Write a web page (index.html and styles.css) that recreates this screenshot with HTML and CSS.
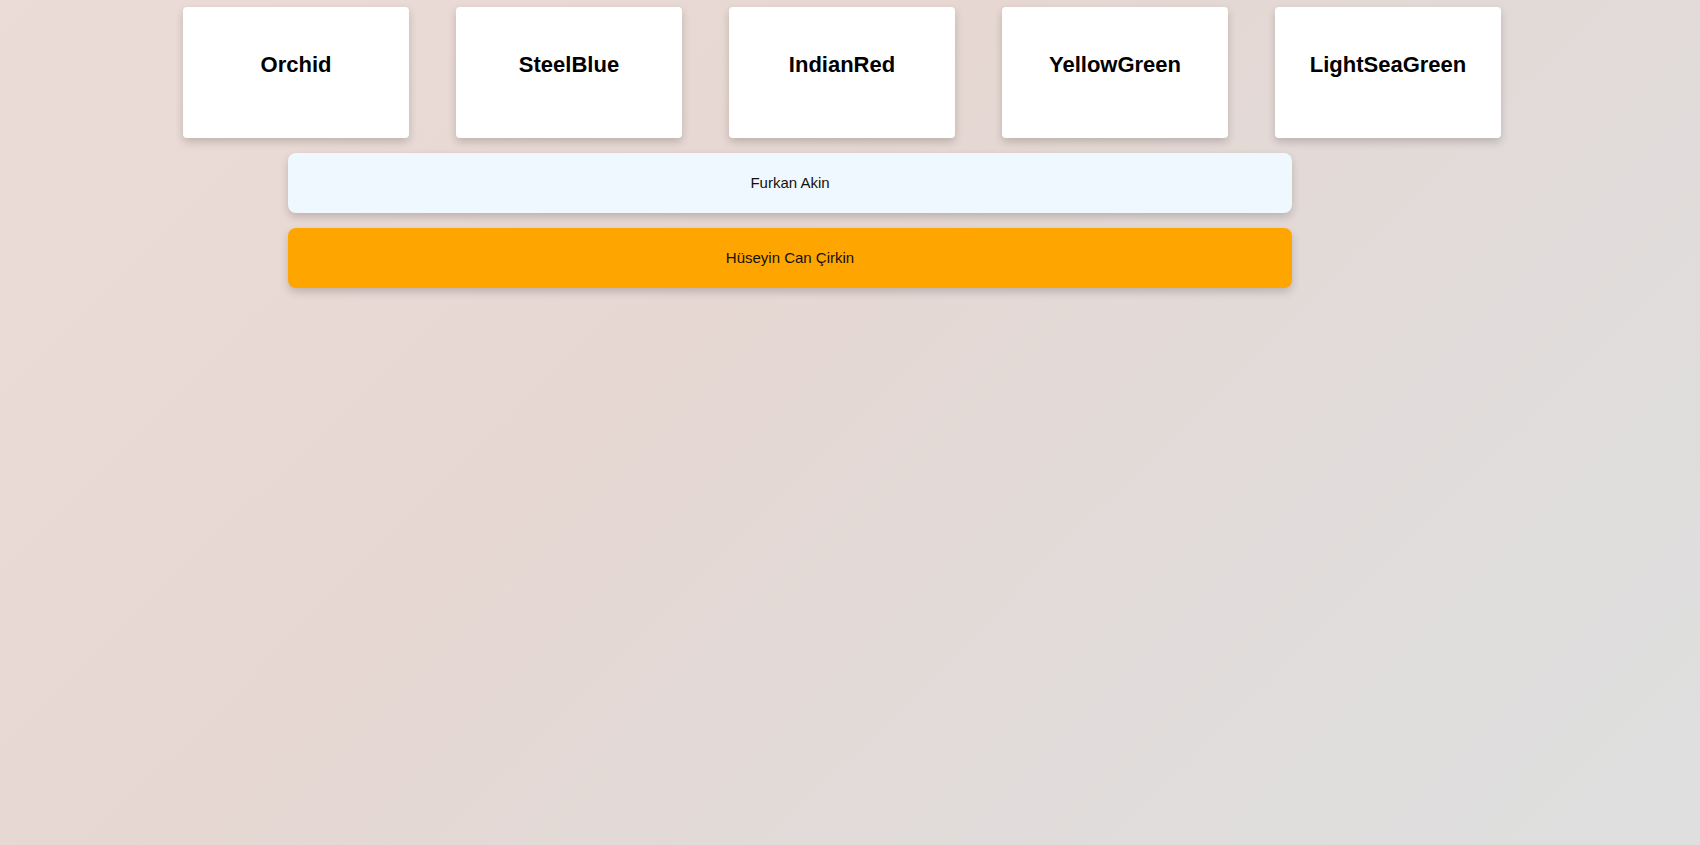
FILE: index.html
```html
<!DOCTYPE html>
<html lang="tr">
<head>
<meta charset="utf-8">
<title>Colors</title>
<link rel="stylesheet" href="styles.css">
</head>
<body>
  <div class="cards">
    <div class="card"><h2 class="card-title">Orchid</h2></div>
    <div class="card"><h2 class="card-title">SteelBlue</h2></div>
    <div class="card"><h2 class="card-title">IndianRed</h2></div>
    <div class="card"><h2 class="card-title">YellowGreen</h2></div>
    <div class="card"><h2 class="card-title">LightSeaGreen</h2></div>
  </div>
  <div class="list">
    <div class="item item-light">Furkan Akin</div>
    <div class="item item-orange">Hüseyin Can Çirkin</div>
  </div>
</body>
</html>
```
FILE: styles.css
```css
html, body {
  margin: 0;
  padding: 0;
  height: 100%;
}
body {
  font-family: "Liberation Sans", Arial, sans-serif;
  color: #000;
  background: linear-gradient(135deg, #ecdcd7 0%, #e6d7d2 40%, #e0dcdb 75%, #dedfdf 100%);
  min-height: 845px;
  overflow: hidden;
}
.cards {
  display: flex;
  gap: 47px;
  padding: 7px 0 0 183px;
}
.card {
  width: 226px;
  height: 131px;
  box-sizing: border-box;
  background: #fff;
  border-radius: 4px;
  box-shadow: 0 4px 8px rgba(0, 0, 0, 0.18);
  padding-top: 45px;
  text-align: center;
}
.card-title {
  margin: 0;
  font-size: 22px;
  font-weight: bold;
  line-height: 25px;
}
.list {
  display: flex;
  flex-direction: column;
  gap: 15px;
  width: 1004px;
  margin: 15px 0 0 288px;
}
.item {
  height: 60px;
  border-radius: 8px;
  display: flex;
  align-items: center;
  justify-content: center;
  font-size: 15px;
  line-height: 17px;
  padding-bottom: 2px;
  box-sizing: border-box;
  color: #111;
  box-shadow: 0 4px 8px rgba(0, 0, 0, 0.18);
}
.item-light {
  background: #f0f8ff;
}
.item-orange {
  background: #ffa500;
}
```
